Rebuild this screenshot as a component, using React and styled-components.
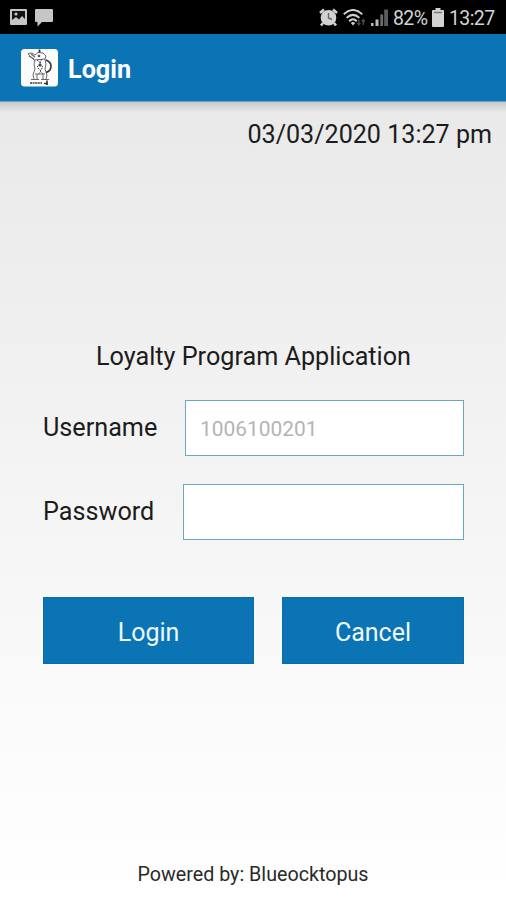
import React from 'react';
import styled, { createGlobalStyle } from 'styled-components';

const USERNAMEPLACEHOLDER = "1006100201";
const BLUE = "#0a74b5";

const GlobalStyle = createGlobalStyle`
  * {
    box-sizing: border-box;
  }
  body {
    margin: 0;
    font-family: Roboto, sans-serif;
  }
`;

const PictureIcon = () => (
  <svg width="17" height="16" viewBox="0 0 17 16">
    <rect width="17" height="16" rx="1" fill="#c6c6c6" />
    <rect x="2" y="2" width="13" height="11" fill="#141414" />
    <path d="M2 13V11L6 8L9 10.5L12 7L15 10V13Z" fill="#c6c6c6" />
    <circle cx="6" cy="5" r="1.6" fill="#c6c6c6" />
  </svg>
);

const MessageIcon = () => (
  <svg width="18" height="18" viewBox="0 0 18 18">
    <path d="M1 0H17Q18 0 18 1V12Q18 13 17 13H7L2.5 17.5V13H1Q0 13 0 12V1Q0 0 1 0Z" fill="#c6c6c6" />
  </svg>
);

const AlarmIcon = () => (
  <svg width="19" height="19" viewBox="0 0 19 19">
    <path d="M1 5L5 1.5M18 5L14 1.5M4 15L2 17.5M15 15L17 17.5" stroke="#d2d2d2" strokeWidth="2.6" />
    <circle cx="9.5" cy="9.7" r="7.8" fill="#d2d2d2" />
    <path d="M9.5 5V10L13 11.5" fill="none" stroke="#666" strokeWidth="1.4" />
  </svg>
);

const WifiIcon = () => (
  <svg width="23" height="18" viewBox="0 0 23 18">
    <g fill="none" stroke="#d0d0d0" strokeWidth="2">
      <path d="M0.8 5.2Q10 -3.2 19.2 5.2" />
      <path d="M3.6 8.9Q10 2.8 16.4 8.9" />
      <path d="M6.2 12.2Q10 8.2 13.8 12.2" />
    </g>
    <path d="M7.8 14Q10 12.2 12.2 14L10 16.4Z" fill="#d0d0d0" />
    <path d="M15.8 10.5V16M14.2 14L15.8 16L17.4 14M20.3 16V10.5M18.7 12.5L20.3 10.5L21.9 12.5" fill="none" stroke="#484848" strokeWidth="1.4" />
  </svg>
);

const SignalIcon = () => (
  <svg width="17" height="18" viewBox="0 0 17 18">
    <rect x="0" y="14" width="2.5" height="3" fill="#bbb" />
    <rect x="4.5" y="10.5" width="3" height="6.5" fill="#bbb" />
    <rect x="9.3" y="5.5" width="2.8" height="11.5" fill="#6c6c6c" />
    <rect x="13.2" y="0.5" width="3.8" height="16.5" fill="#5c5c5c" />
  </svg>
);

const BatteryIcon = () => (
  <svg width="12" height="19" viewBox="0 0 12 19">
    <path d="M3.5 0H8.5V2H11Q12 2 12 3V18Q12 19 11 19H1Q0 19 0 18V3Q0 2 1 2H3.5Z" fill="#d2d2d2" />
    <path d="M2 4.5H10" stroke="#777" strokeWidth="1.4" />
  </svg>
);

const AppLogo = () => (
  <svg width="37" height="38" viewBox="0 0 37 38">
    <rect width="37" height="37.5" rx="3.5" fill="#fdfdfd" />
    <g fill="none" stroke="#6a6a6a" strokeWidth="1">
      <path d="M7 4.5L11 4L14 6L17 3.5L22 4L25 7L24 10L13 11L7 5" />
      <path d="M8 7L13 10M10 5L14 8" strokeWidth="1.4" />
      <path d="M18.5 0.5V3.5" stroke="#333" strokeWidth="1.8" />
      <path d="M14 11L13 15L14 20L12 26L13 30M24 10L25 15L24 20L26 26L25 30" />
      <path d="M16 11L20 14L16 18L20 22L17 26M21 10L18 15L22 18L19 22L22 25" stroke="#444" strokeDasharray="2 1" />
      <path d="M25 11Q30 13 30 17Q30 22 25 23.5" stroke="#333" strokeWidth="1.6" />
      <path d="M14 25H24M16 25V30M22 25V30M10 30.5H18M20 30.5H28" />
      <path d="M9 34H21" strokeWidth="2" strokeDasharray="2 0.6" />
      <path d="M23 34.5H27M26 31.5V36" stroke="#333" strokeWidth="1.6" />
    </g>
    <circle cx="18" cy="7" r="1.3" fill="#555" />
    <circle cx="19" cy="16" r="1.6" fill="#444" />
  </svg>
);

class App extends React.Component {
  state = {
    username: '',
    password: ''
  }

  handleChange = (event) => {
    this.setState({ [event.target.name]: event.target.value });
  }

  handleSubmit = (event) => {
    event.preventDefault();
  }

  handleCancel = () => {
    this.setState({ username: '', password: '' });
  }

  render() {
    const { username, password } = this.state;
    return (
      <React.Fragment>
        <GlobalStyle />
        <Screen>
          <StatusBar>
            <Notifications>
              <PictureIcon />
              <MessageIcon />
            </Notifications>
            <SystemIcons>
              <AlarmIcon />
              <WifiIcon />
              <SignalIcon />
              <StatusText $width={34}>82%</StatusText>
              <BatteryIcon />
              <StatusText $width={46}>13:27</StatusText>
            </SystemIcons>
          </StatusBar>
          <Header>
            <AppLogo />
            <HeaderTitle>Login</HeaderTitle>
          </Header>
          <Content>
            <DateText>03/03/2020 13:27 pm</DateText>
            <Form onSubmit={this.handleSubmit}>
              <Title>Loyalty Program Application</Title>
              <Field>
                <Label htmlFor="username" $width={142}>Username</Label>
                <Input
                  id="username"
                  name="username"
                  placeholder={USERNAMEPLACEHOLDER}
                  onChange={this.handleChange}
                  value={username}
                />
              </Field>
              <Field>
                <Label htmlFor="password" $width={140}>Password</Label>
                <Input
                  id="password"
                  name="password"
                  type="password"
                  onChange={this.handleChange}
                  value={password}
                />
              </Field>
              <Buttons>
                <Button type="submit">Login</Button>
                <Button type="button" onClick={this.handleCancel}>Cancel</Button>
              </Buttons>
            </Form>
            <Footer>Powered by: Blueocktopus</Footer>
          </Content>
        </Screen>
      </React.Fragment>
    )
  }
}

const Screen = styled.div`
  display: flex;
  flex-direction: column;
  width: 506px;
  height: 900px;
  overflow: hidden;
`;
const StatusBar = styled.div`
  display: flex;
  justify-content: space-between;
  height: 34px;
  padding: 0 11px 0 10px;
  background-color: #000;
`;
const Notifications = styled.div`
  display: flex;
  align-items: flex-start;
  gap: 8px;
  padding-top: 9px;
`;
const SystemIcons = styled.div`
  display: flex;
  align-items: center;
  gap: 5px;
  height: 35px;
`;
const StatusText = styled.span`
  width: ${props => props.$width}px;
  color: #d4d4d4;
  font-size: 19.5px;
  letter-spacing: -0.6px;
  line-height: 36px;
  padding-top: 2px;
  white-space: nowrap;
`;
const Header = styled.header`
  display: flex;
  align-items: center;
  gap: 10px;
  height: 68px;
  padding-left: 21px;
  background-color: ${BLUE};
  border-bottom: 1px solid #6fa0bd;
`;
const HeaderTitle = styled.h1`
  margin: 0;
  padding-top: 5px;
  color: #fff;
  font-size: 25.2px;
  font-weight: bold;
  line-height: 30px;
`;
const Content = styled.main`
  display: flex;
  flex-direction: column;
  flex: 1;
  background: linear-gradient(#c9c9c9 0, rgba(220, 220, 220, 0) 10px), linear-gradient(#e9e9e9, #f1f1f1 35%, #f8f8f8 65%, #fff);
`;
const DateText = styled.div`
  padding: 18px 14px 0 0;
  color: #1c1c1c;
  font-size: 25.1px;
  line-height: 30px;
  text-align: right;
`;
const Form = styled.form`
  display: flex;
  flex-direction: column;
  padding: 192px 42px 0 43px;
`;
const Title = styled.h2`
  margin: 0 0 28px;
  color: #1c1c1c;
  font-size: 25.2px;
  font-weight: normal;
  line-height: 30px;
  text-align: center;
`;
const Field = styled.div`
  display: flex;
  align-items: center;
  height: 56px;
  margin-bottom: 28px;
`;
const Label = styled.label`
  width: ${props => props.$width}px;
  flex-shrink: 0;
  color: #1c1c1c;
  font-size: 25.2px;
  line-height: 30px;
`;
const Input = styled.input`
  flex: 1;
  min-width: 0;
  height: 56px;
  padding: 2px 14px 0;
  border: 1px solid #68a9c0;
  border-radius: 0;
  background-color: #fff;
  font-family: inherit;
  font-size: 20.9px;
  &::placeholder {
    color: #b4b4b4;
  }
  &:focus {
    outline: none;
  }
`;
const Buttons = styled.div`
  display: grid;
  grid-template-columns: 211px 182px;
  gap: 28px;
  margin-top: 29px;
`;
const Button = styled.button`
  height: 67px;
  padding: 3px 0 0;
  border: 1px solid #0a6cab;
  background-color: ${BLUE};
  color: #eef8fd;
  font-family: inherit;
  font-size: 25px;
  cursor: pointer;
`;
const Footer = styled.footer`
  margin-top: auto;
  padding-bottom: 13px;
  color: #2a2a2a;
  font-size: 19.7px;
  line-height: 24px;
  text-align: center;
`;
export default App;
